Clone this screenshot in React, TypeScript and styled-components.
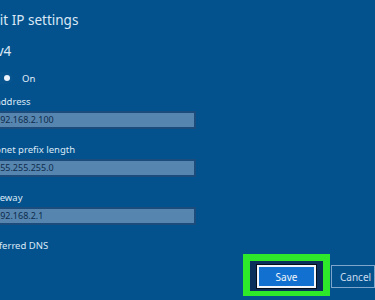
import React from 'react'
import styled, { createGlobalStyle } from 'styled-components'

const Global = createGlobalStyle`
  html, body {
    margin: 0;
    padding: 0;
    background: #03528e;
  }
  * {
    box-sizing: border-box;
  }
`

const Screen = styled.div`
  width: 375px;
  height: 300px;
  overflow: hidden;
  background: #03528e;
  color: #e4eef8;
  font-family: 'Noto Sans', 'Open Sans', sans-serif;
`

// Content starts left of the visible area, like the cropped screenshot
const Panel = styled.div`
  margin-left: -16px;
  padding-top: 11px;
  display: flex;
  flex-direction: column;
`

const Title = styled.h1`
  margin: 0;
  font-size: 13.5px;
  font-weight: 400;
  line-height: 18px;
  color: #dbe8f5;
`

const Subtitle = styled.h2`
  margin: 13px 0 0;
  font-size: 13.5px;
  font-weight: 400;
  line-height: 18px;
  color: #dbe8f5;
`

const ToggleRow = styled.div`
  margin-top: 11px;
  display: flex;
  align-items: center;
  gap: 9px;
  height: 14px;
`

const Switch = styled.div`
  width: 29px;
  height: 12px;
  border-radius: 6px;
  background: #07548f;
  display: flex;
  align-items: center;
  justify-content: flex-end;
  padding-right: 3px;

  span {
    width: 6px;
    height: 6px;
    border-radius: 50%;
    background: #eef3fb;
  }
`

const ToggleLabel = styled.span`
  font-size: 9.5px;
  color: #e4eef8;
`

const Field = styled.div<{ $gap: number }>`
  margin-top: ${p => p.$gap}px;
  display: flex;
  flex-direction: column;
  gap: 3px;
`

const Label = styled.label`
  font-size: 9.5px;
  line-height: 13px;
  color: #dbe8f5;
`

const Input = styled.div`
  width: 212px;
  height: 18px;
  background: #5686b0;
  border: 2px solid #1c4c7b;
  padding-left: 9px;
  font-size: 9px;
  line-height: 14px;
  color: #0e2c4c;
`

const Footer = styled.div`
  margin-top: 2px;
  padding-left: 259px;
  display: flex;
  align-items: flex-start;
`

const Highlight = styled.div`
  border: 7px solid #2ee82a;
  border-bottom-width: 5px;
  background: #0a2f5a;
  padding: 4px 7px 3px;
`

const SaveButton = styled.button`
  display: block;
  width: 59px;
  height: 23px;
  background: #1271d0;
  border: 2px solid #f2f6fb;
  outline: 1px solid #050d1a;
  color: #f2f6fb;
  font-family: inherit;
  font-size: 10px;
  padding: 0;
`

const CancelButton = styled.button`
  margin-top: 11px;
  margin-left: 1px;
  width: 60px;
  height: 23px;
  background: transparent;
  border: 1px solid #7ea6cc;
  color: #c9dbef;
  font-family: inherit;
  font-size: 10px;
  text-align: left;
  padding: 0 0 0 8px;
`

export default function App() {
  return (
    <Screen>
      <Global />
      <Panel>
        <Title>Edit IP settings</Title>
        <Subtitle>IPv4</Subtitle>
        <ToggleRow>
          <Switch><span /></Switch>
          <ToggleLabel>On</ToggleLabel>
        </ToggleRow>
        <Field $gap={10}>
          <Label>IP address</Label>
          <Input>192.168.2.100</Input>
        </Field>
        <Field $gap={14}>
          <Label>Subnet prefix length</Label>
          <Input>255.255.255.0</Input>
        </Field>
        <Field $gap={14}>
          <Label>Gateway</Label>
          <Input>192.168.2.1</Input>
        </Field>
        <Field $gap={14}>
          <Label>Preferred DNS</Label>
        </Field>
        <Footer>
          <Highlight>
            <SaveButton>Save</SaveButton>
          </Highlight>
          <CancelButton>Cancel</CancelButton>
        </Footer>
      </Panel>
    </Screen>
  )
}
